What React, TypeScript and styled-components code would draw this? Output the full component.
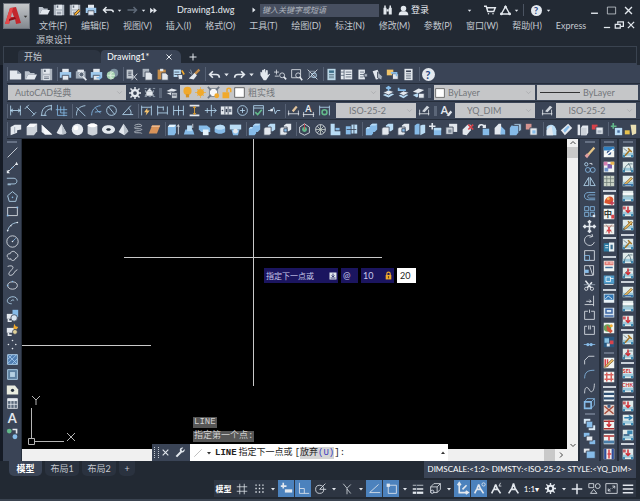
import React from "react";
import styled, { createGlobalStyle, css } from "styled-components";

const color = {
  frame: "#222933",
  bar: "#3a4456",
  edge: "#252d3a",
  line: "#3a4350",
  text: "#c3c8cf",
  bright: "#e9edf2",
  field: "#c5c6c8",
  accent: "#4c82bd",
};

const Global = createGlobalStyle`
  * { box-sizing: border-box; }
  html, body, #root { height: 100%; margin: 0; }
  body {
    background: ${color.frame};
    color: ${color.text};
    font: 9px/12px Lato, "Noto Sans CJK SC", sans-serif;
    overflow: hidden;
  }
  button, input, select { font: inherit; color: inherit; margin: 0; padding: 0; border: 0; background: none; border-radius: 0; outline: 0; }
`;

/* ---------- icons ---------- */

type Shape = [d: string, fill?: string, stroke?: string, width?: number];
type Letter = { t: string; x: number; y: number; s: number; f: string };
type Part = Shape | Letter;

const W = "#e3e8ee";
const G = "#9aa7b6";
const B = "#86bbe8";
const L = "#b9dcf5";
const O = "#f0a92c";
const R = "#d8434a";
const N = "none";
const K = "#3a4456";
const GR = "#62b98a";

const ring = (x: number, y: number, r: number) =>
  `M${x - r} ${y}a${r} ${r} 0 1 0 ${2 * r} 0a${r} ${r} 0 1 0 ${-2 * r} 0`;
const box = (x: number, y: number, w: number, h: number) => `M${x} ${y}h${w}v${h}h${-w}z`;

const printer: Part[] = [
  [box(4, 1, 8, 5), W],
  [box(1, 5, 14, 7), "#9fc9ec"],
  [box(4, 9, 8, 6), W, K, 1],
];
const floppy: Part[] = [
  ["M1 1h14v14h-14z", "#aeb6c0"],
  [box(4, 1, 8, 6), W],
  [box(4, 9, 8, 6), W],
  [box(5, 2, 2, 3), "#5d6877"],
  ["M5 11h6M5 13h6", N, "#5d6877", 1],
];
const cubes = (a: string, b: string): Part[] => [
  ["M6 3l3-2h6v7l-3 2h-6z", a],
  ["M1 7l2-2h7v8l-2 2h-7z", b, K, 1],
];
const sheet = (...extra: Part[]): Part[] => [[box(1, 1, 14, 14), "#f1f4f2"], ...extra];
const gateBase: Part[] = [
  [box(1, 1, 14, 14), "#dfeaea"],
  [box(1, 9, 14, 4), "#9cc8da"],
  [box(1, 12, 3, 3), "#3b86b0"],
  [box(12, 12, 3, 3), "#3b86b0"],
];
const gate = (...extra: Part[]): Part[] => [...gateBase, ...extra];
const downArrow: Part = ["M8 2v8M5 7l3 3 3-3", N, "#cf2f38", 2];
const pencil: Part = ["M3 12L12 3l2 2-9 8-3 1z", "#f0c468", "#7b5a2c", 1];
const arcMark: Part = ["M3 13C4 6 8 3 14 4", N, "#46606c", 1];
const hammer: Part = ["M4 13L11 5M8 3l5 5", N, "#a47526", 2];

const icons: Record<string, Part[]> = {
  new: [["M1 3h9l5 4v7h-14z", W], ["M10 3v4h5", "#8894a3"]],
  open: [["M1 4h5l2 2h5v2h-8l-3 6h-1z", "#b9c1cb"], ["M5 8h11l-3 6h-11z", W]],
  save: floppy,
  saveas: [...floppy, ["M7 13l6-6 2 2-6 6h-2z", O, "#4a3b2a", 1]],
  print: printer,
  preview: [[box(1, 4, 12, 9), "#9ca7b4"], [box(3, 2, 8, 3), W], [ring(8, 8, 3), "#5c6878", W, 1], ["M10 11l4 4", N, W, 2]],
  publish: [...printer, ["M8 11h3v-2l4 3-4 3v-2h-3z", B]],
  globe: [[ring(10, 6, 5), "#7d91a0"], [ring(6, 9, 5), "#a6d3b1"], ["M2 9h9M6 4v10M9 5c-6 3-5 7 0 8", N, "#e0efe3", 1]],
  cut: [[box(2, 2, 8, 11), "#c1c8d0"], ["M4 5h4M4 7h4M4 9h4", N, K, 1], ["M8 7l7 8M15 7l-7 8", N, W, 1]],
  copy: [[box(2, 1, 8, 10), "#aab3be"], ["M5 5h6l3 3v7h-9z", W, K, 1]],
  paste: [[box(2, 2, 10, 12), "#c58e4b"], [box(5, 1, 4, 3), W], ["M7 6h5l3 3v6h-8z", W, K, 1]],
  match: [[box(2, 2, 9, 9), L], ["M3 5h6M3 8h5", N, K, 1], ["M7 8h6v6h-5z", "#dfe6ee", K, 1], ["M12 3l3 5", N, O, 2]],
  brush: [["M14 2l-6 6", N, "#c58e4b", 3], ["M8 6l3 3-4 5-6-1z", W], ["M1 5l4 3M3 2l2 5", N, G, 1]],
  undo: [["M6 4L2 8l4 4M2 8h8c3 0 4 1 4 4", N, W, 2]],
  back: [["M6 4L2 8l4 4M2 8h10c2 0 3 1 3 3", N, W, 2]],
  backdim: [["M10 4l4 4-4 4M14 8h-12", N, "#5e6978", 2]],
  redo: [["M10 4l4 4-4 4M14 8h-8c-3 0-4 1-4 4", N, W, 2]],
  down: [["M4 6h8l-4 5z", W]],
  hand: [["M3 9V5c1-1 2 0 2 2V3c1-2 2 0 2 0v3V2c1-2 2 0 2 0v4l1-3c1-1 2 0 2 1v5l2-2c1 0 1 1 0 2l-4 6H7z", W]],
  zoomrt: [["M3 2v6M0 5h6M1 10h5", N, W, 1], [ring(10, 9, 3), N, W, 1], ["M12 11l3 3", N, W, 2]],
  zoomwin: [[box(2, 2, 11, 10), N, W, 1], [ring(10, 9, 3), K, W, 1], ["M12 11l3 4", N, W, 2]],
  zoomprev: [["M2 2l12 12M14 2l-12 12", N, W, 1], [box(4, 4, 7, 7), N, G, 1], [ring(10, 9, 3), N, L, 1]],
  props: [[box(3, 1, 10, 14), "#b9d6e6"], [box(5, 3, 6, 3), "#3c6e88"], ["M5 8h6M5 10h6M5 12h6", N, "#56707e", 1]],
  center: [[box(1, 2, 14, 12), W], ["M5 2v12M7 5h7M7 8h7M7 11h7M1 5h4M1 9h4", N, "#556274", 1]],
  palettes: [[box(3, 2, 8, 12), W], ["M5 5h5M5 8h5M5 11h4", N, "#556274", 1], [box(10, 7, 4, 4), "#aab3be", K, 1]],
  sheets: [["M2 4l6-2 5 11-7 1z", W], ["M8 5l6 5-1 5-5-3z", "#aab3be", K, 1]],
  markup: [[box(1, 2, 8, 7), "#f0c468"], [box(8, 7, 7, 7), W, K, 1], ["M6 6h7v4", N, B, 2]],
  calc: [[box(3, 1, 10, 14), W], [box(5, 3, 6, 2), K], ["M5 7h6M5 9h6M5 11h6M5 13h6", N, "#6b7787", 1]],
  gear: [[ring(8, 8, 4), N, W, 3], ["M8 0v4M8 12v4M0 8h4M12 8h4M2 2l3 3M11 11l3 3M14 2l-3 3M5 11l-3 3", N, W, 2]],
  ws: [["M2 3h3M7 3h3M12 3h3M2 13h3M7 13h3M12 13h3M3 5v3M3 10v3M13 5v3M13 10v3", N, G, 1], [box(4, 7, 8, 5), W], ["M8 3l4 4h-8z", W]],
  layers: [["M2 6l6-3 7 2-6 3z", W], ["M1 9l7-2 6 1-6 4z", W, K, 1], [box(8, 8, 7, 7), W, K, 1], ["M9 10h5M9 12h5", N, K, 1]],
  bulb: [[ring(8, 6, 5), O], [box(6, 10, 4, 4), "#d69324"]],
  sun: [[ring(8, 8, 5), O], ["M8 0v16M0 8h16M3 3l10 10M13 3l-10 10", N, O, 1]],
  freeze: [[box(3, 3, 10, 10), "#f7f7f7", "#6c7683", 1], ["M1 1l4 4M15 1l-4 4M1 15l4-4", N, "#6c7683", 2], [ring(12, 12, 3), O]],
  unlock: [[box(2, 7, 9, 8), O], ["M8 7V4c0-3 5-3 5 0v3", N, O, 2]],
  lock: [[box(3, 7, 10, 8), O], ["M5 7V5c0-4 6-4 6 0v2", N, O, 2], [box(7, 9, 2, 4), "#6a4a10"]],
  swatch: [[box(1, 1, 14, 14), "#fff", "#333", 1]],
  lay1: [["M1 11l7-3 7 2-7 4z", L], ["M1 8l7-3 7 2-7 4z", W, K, 1], ["M8 6V1M5 3l3-2 3 2", N, B, 2]],
  lay2: [["M2 12l6-3 6 2-6 4z", L], ["M2 9l6-3 7 2-7 4z", W, K, 1], ["M2 2v3h9", N, B, 2]],
  lay3: [["M1 7l7-4 7 2-7 4z", W], ["M1 11l6-2 4 1-5 4z", L], [box(8, 9, 7, 6), W, K, 1]],
  dlin: [["M2 2v12M14 2v12M2 8h12M5 6l-3 2 3 2M11 6l3 2-3 2", N, L, 1]],
  dali: [["M3 3l10 10M1 6l5-5M10 15l5-5", N, L, 1]],
  darc: [["M2 14C2 6 6 2 14 2M6 14c0-5 4-8 8-8M1 14h7M14 1v7", N, L, 1]],
  dord: [["M3 1v13h12M7 3v8h8M11 3v12M1 7h14", N, B, 1]],
  drad: [["M14 2C6 3 3 7 3 14M3 4l11 11", N, L, 1]],
  djog: [["M13 2C5 3 2 8 2 14M7 5l3 4 3 2M6 10l8-1", N, B, 1]],
  ddia: [[ring(8, 8, 6), N, L, 1], ["M4 3l8 10", N, L, 1]],
  dang: [["M2 13h13M2 13L12 2M9 5c3 2 4 5 3 8", N, L, 1]],
  dquick: [["M2 2v12M14 2v12M2 4h12", N, L, 1], ["M9 5l-4 5h3l-1 4 5-6h-3z", "#f7c56d"]],
  dbase: [["M2 2v12M14 3v10M9 3v5M2 4h7M2 11h12", N, L, 1]],
  dcont: [["M2 2v12M8 2v12M14 2v12M2 8h12", N, L, 1]],
  dspace: [["M2 2h12M2 14h12", N, W, 2], ["M8 3v10M6 5l2-2 2 2M6 11l2 2 2-2", N, O, 1]],
  dbreak: [["M1 8h14M9 1v14M4 5v6M12 5l3 3-3 3", N, L, 1]],
  tol: [[box(1, 3, 14, 10), W], ["M6 3v10M10 3v10", N, K, 1], [ring(3, 8, 1), K], [box(7, 6, 2, 4), K], [box(11, 6, 3, 4), "#6b7787"]],
  cmark: [[ring(8, 8, 6), N, L, 1], ["M8 5v6M5 8h6", N, L, 1]],
  insp: [["M2 14V2h12v12M2 5h12", N, L, 1], ["M4 10l3 3 5-6", N, GR, 2]],
  jogl: [["M0 8h5l2-4 2 8 2-4h4", N, L, 1], [box(3, 6, 3, 3), W]],
  dedit: [["M1 12h14M2 8v6M14 8v6", N, W, 1], ["M6 8l5-6 2 2-5 6z", "#e1c49c"]],
  dtedit: [["M1 13h14M2 10v6M14 10v6", N, W, 1], { t: "A", x: 4, y: 10, s: 11, f: W }],
  dupd: [["M2 2v12M14 2v12M2 4h12", N, L, 1], [ring(8, 10, 3), N, GR, 2]],
  dsty: [["M1 12h13M2 7v7M13 7v7", N, W, 1], ["M5 9l6-7 3 2-6 6z", "#cfd5dc"]],
  tsty: [{ t: "A", x: 1, y: 12, s: 13, f: W }, ["M8 14l5-6 2 2-4 5z", W]],
  polysolid: [["M2 5l5-3h8v6l-5 1v3l-8 3z", W], ["M7 5v7", N, "#95a1af", 1]],
  cube: [["M2 5l4-4h9v9l-4 5h-9z", "#cdd3da"], ["M2 5l4-4h9l-4 4z", "#f6f7f9"]],
  wedge: [["M2 2l13 12h-9l-4-3z", W], ["M2 2l4 12 9 0z", "#f6f7f9"]],
  cone: [["M8 1l6 11c-2 3-10 3-12 0z", W], ["M8 1l6 11c-1 2-4 2-5 2z", "#b8c0c9"]],
  sphere: [[ring(8, 8, 7), W], [ring(6, 6, 3), "#fff"]],
  cyl: [["M2 3c2-3 10-3 12 0v10c-2 3-10 3-12 0z", "#cdd3da"], ["M2 3c2-3 10-3 12 0-2 3-10 3-12 0z", "#fff"]],
  torus: [["M0 8c0-7 16-7 16 0s-16 7-16 0z", W], ["M5 8c1-2 5-2 6 0-1 2-5 2-6 0z", "#26303e"]],
  pyr: [["M8 1l6 9-5 5-7-4z", W], ["M8 1l6 9-5 5z", "#b8c0c9"]],
  helix: [["M3 3c3-2 8-2 9 0s-9 1-9 3 9 0 9 2-9 1-9 3 9 0 9 2", N, "#c3cad2", 1]],
  plane: [["M5 3h10l-4 10h-10z", "#d8935a"], ["M5 3h10l-1 2h-10z", "#ecb98d"]],
  extr: [["M1 5l2-3h8v10l-2 3h-8z", B], ["M1 5l2-3h8l-2 3z", "#e5f3fc"], ["M14 14V3M12 5l2-3 1 3", N, W, 1]],
  press: [["M3 8h9l2 6h-13z", B], ["M5 3h6v7h-6z", L], ["M12 1v5", N, W, 1]],
  sweep: [["M1 3h10l4 3v5h-11l-3-3z", B], [box(6, 8, 7, 7), "#e5f3fc"]],
  revolve: [["M2 6c2-5 12-5 13 0v5c-3 3-10 3-13 0z", B], ["M2 6c2-5 12-5 13 0-3 3-10 3-13 0z", L]],
  loft: [[box(1, 2, 14, 6), L], ["M3 8h10l-2 7h-6z", B], [ring(8, 10, 3), W]],
  union: [["M6 3l3-2h6v7l-3 3h-2v2l-2 2h-7v-8l2-2h3z", B], ["M6 3l3-2h6l-2 2zM1 7l2-2h3l-1 2z", L]],
  subtract: cubes(L, W),
  intersect: [...cubes(W, W), [box(6, 7, 4, 4), B, K, 1]],
  gizmo: [["M8 1l6 4v7l-6 3-6-3V5z", N, W, 1], [ring(8, 8, 3), GR], ["M8 8V1", N, R, 1]],
  orbit: [[ring(8, 8, 6), N, W, 1], ["M2 8h12M8 2v12M4 4l8 8M12 4l-8 8", N, "#c3cdc6", 1]],
  sect: [["M2 1h5v9h7v5h-12z", L], ["M8 6h5v3h-5z", B]],
  slice: [["M1 4h6v10h-6z", B], ["M8 2h7v11h-7z", L], ["M2 8h12M11 2v12", N, K, 1]],
  imprint: [["M2 3l3-2h3v13h-6z", B], ["M9 3l3-1h3v10l-6 3z", L]],
  move3: [["M4 0v8M0 4h8", N, W, 2], [box(6, 6, 9, 9), B], [box(6, 6, 9, 3), L]],
  offset3: [[box(5, 1, 10, 10), W], [box(1, 5, 9, 9), "#cdd3da", K, 1], [box(4, 8, 4, 4), "#808c9a"]],
  del3: [["M2 14V8l6-6h4v7l-5 6z", W], ["M9 2l6 6M15 2l-6 6", N, R, 2]],
  rot3: [["M2 6c0-5 6-5 7-1M7 5h3V2", N, W, 2], [box(7, 7, 8, 8), B]],
  taper: [["M2 14V6l5-5 3 0v13z", W], ["M10 4l5 5v5h-6z", B]],
  copyf: [["M1 6l2-3h9v8l-3 4h-8z", B], ["M5 3l2-2h8v8l-3 2V3z", L, K, 1]],
  colorf: [[box(1, 1, 7, 7), "#d4938f"], [box(6, 6, 9, 9), W, K, 1], [box(9, 9, 4, 4), B]],
  fillet: [["M2 15V5c4-5 11-3 12 4v6z", L], ["M2 15V9l6-6 2 12z", W]],
  chamf: [["M1 9l9-8 5 5-9 9z", W], ["M4 9l6-6 2 2-6 7z", B]],
  thick: [["M2 2h3v13h-3z", W], ["M6 6l2-3h7v9l-2 3h-7z", W], [box(6, 6, 7, 9), "#cdd3da"]],
  shell: [[box(1, 2, 7, 6), R], [box(6, 5, 9, 9), W, K, 1], [box(8, 9, 5, 3), "#aab3be"]],
  check: [["M4 0v7M1 4h7", N, GR, 2], [box(6, 6, 9, 9), L], [box(9, 9, 3, 3), "#4a6fa0"]],
  light: [["M8 2h7v11l-5 2z", "#e9dfb3"], [box(1, 9, 6, 5), "#e6c24d"]],
  line: [["M2 14L14 2", N, W, 1]],
  xline: [["M3 13L13 3", N, W, 1], [ring(3, 12, 1), W], ["M13 1l2 4h-4zM1 15v-4l4 4z", W], [ring(8, 8, 1), B]],
  pline: [["M1 4h9c5 1 4 7 0 7h-8M2 12h4", N, L, 1]],
  poly: [["M8 2l6 5-2 7h-8l-2-7z", N, L, 1], [ring(8, 9, 1), B]],
  rect: [[box(2, 3, 12, 10), N, W, 1], [box(1, 12, 2, 2), B], [box(13, 2, 2, 2), B]],
  arc: [["M2 14C3 8 7 4 14 3", N, L, 1], [ring(2, 13, 1), W], [ring(6, 7, 1), W], [ring(14, 3, 1), W]],
  circle: [[ring(8, 8, 7), N, W, 1], ["M8 8l4-4", N, B, 1], [ring(8, 8, 1), W]],
  cloud: [["M3 11c-3-2-1-6 2-5 1-4 6-4 7-1 4 1 3 6 0 6-1 4-6 4-6 1-2 1-4 0-3-1z", N, W, 1]],
  spline: [["M2 3c5-2 9 0 5 4s-5 7-1 7 4-6 8-7", N, W, 1]],
  ellipse: [["M2 8c0-6 12-6 12 0s-12 6-12 0z", N, W, 1], [ring(8, 3, 1), B], [ring(2, 8, 1), B]],
  earc: [["M7 12c-5 0-6-3-5-5 2-5 12-5 12 1M6 9c1-2 3-2 4-1", N, L, 1]],
  insert: [[box(1, 6, 9, 6), W], [box(8, 1, 7, 9), B], [ring(10, 11, 4), "#d7e4ef", K, 1], ["M3 12v3h4", N, W, 2]],
  block: [[box(1, 6, 9, 6), W], ["M10 1l2 3 3 1-2 3-4-1z", O], [ring(11, 11, 3), "#e1d29a", K, 1], ["M3 12v3h4", N, W, 2]],
  point: [[ring(8, 3, 1), W], [ring(3, 8, 1), W], [ring(12, 8, 1), W], [ring(8, 13, 1), W]],
  hatch: [[box(2, 2, 12, 12), "#4f7db0", L, 1], ["M2 8l6-6M2 13L13 2M7 14l7-7M3 3l11 11", N, "#a8cdf0", 1]],
  grad: [[box(2, 2, 12, 12), "#5c7f9f", L, 1], [box(5, 5, 6, 6), "#b5d0e2"]],
  region: [["M1 3h10l4 5v6h-14z", "#e9ecdf"], [ring(8, 9, 2), "#26303e"]],
  table: [[box(2, 2, 12, 12), "#59687b", W, 1], [box(2, 2, 12, 3), W], ["M6 4v10M10 4v10M2 9h12", N, W, 1]],
  text: [{ t: "A", x: 2, y: 14, s: 16, f: W }],
  addsel: [[ring(4, 5, 3), GR], ["M8 3h5v5", N, W, 2], [ring(11, 12, 3), B]],
  erase: [["M5 10l8-9 2 2-8 9z", "#e6c586"], ["M2 12l3-3 3 2-3 4z", "#de9fa0"]],
  copyo: [[ring(4, 4, 2), N, L, 1], ["M8 3h3v2", N, W, 1], [ring(6, 11, 3), N, B, 1], [ring(12, 11, 3), N, B, 1]],
  mirror: [["M7 3v10h-6zM9 3v10h6z", N, L, 1]],
  offset: [["M15 3H7c-7 0-7 9 0 9h8M15 6H8c-3 0-3 4 0 4h7", N, B, 1]],
  array: [[box(2, 2, 5, 5), N, B, 1], [box(9, 2, 5, 5), N, B, 1], [box(2, 9, 5, 5), N, B, 1], [box(9, 9, 5, 5), N, B, 1], [box(12, 12, 3, 3), W]],
  move: [["M8 1v14M1 8h14M6 3l2-2 2 2M6 13l2 2 2-2M3 6L1 8l2 2M13 6l2 2-2 2", N, W, 2]],
  rotate: [["M11 3c-5-3-10 1-9 6s9 8 12 1M8 4l4-1-1-3", N, W, 1]],
  scale: [[box(2, 2, 12, 12), N, W, 1], [box(2, 8, 6, 6), N, B, 1]],
  stretch: [["M2 2h6l4 12h-10zM8 2h5v12", N, W, 1], [box(2, 7, 5, 4), B]],
  trim: [["M3 2l7 9M11 4l-6 7", N, W, 2], [ring(4, 12, 2), N, W, 1], [ring(11, 12, 2), N, W, 1], ["M1 7h14", N, G, 1]],
  extend: [["M2 13h11M13 2v13M4 9h6M8 7l2 2-2 2", N, W, 1]],
  brk1: [["M6 4H2v10h12V4h-4M8 2v4", N, W, 1]],
  brk: [["M5 4H2v10h12V4h-3M7 3v5M9 3v5", N, W, 1]],
  join: [["M1 8h14", N, B, 1], [ring(6, 8, 2), B], [ring(10, 8, 2), B]],
  cham: [["M2 14V9l5-5h7", N, W, 1]],
  fil: [["M2 14c0-8 4-10 12-10", N, B, 1]],
  blend: [["M2 14c0-10 4-8 6-4s6 2 6-8", N, W, 1]],
  explode: [[box(2, 6, 8, 8), N, B, 2], ["M2 6l3-4h9v8l-4 4M10 6l4-4", N, B, 1]],
  ord1: [[box(1, 1, 8, 6), "#d7e8f5"], [box(7, 9, 8, 6), "#d7e8f5"], [box(4, 4, 8, 8), B, K, 1]],
  ord2: [[box(1, 1, 7, 5), B], [box(8, 10, 7, 5), B], [box(4, 5, 8, 6), W, K, 1]],
  ord3: [[box(1, 2, 7, 5), W], [box(4, 5, 11, 9), B, K, 1]],

  y1: sheet([box(1, 1, 14, 5), "#2e7fc0"], [ring(8, 9, 3), "#3d5b8c"], ["M2 14L14 4", N, "#fff", 2]),
  y2: sheet([box(1, 1, 5, 5), "#d67fb0"], [box(6, 4, 6, 6), "#7d5fae"], [box(10, 1, 5, 4), "#eab551"], [box(2, 9, 5, 5), "#6f93cb"]),
  y3: [[box(1, 1, 14, 14), "#c9d2c6"], ["M5 1v14M10 1v14M1 5h14M1 10h14", N, "#6e7b76", 1]],
  y4: sheet(["M2 12C2 3 13 0 14 8l-4 6z", "#d9542e"], [ring(7, 6, 2), "#f5b05a"], ["M9 12h6M12 9v6", N, "#c23a52", 2]),
  y5: sheet({ t: "中", x: 1, y: 12, s: 11, f: "#333b36" }, [box(11, 9, 4, 5), R]),
  y6: sheet(["M1 4h14M4 2l8 11M12 2l-8 11", N, "#a0766c", 1], ["M8 5v9M5 10h6", N, R, 2]),
  y7: [[box(1, 3, 9, 11), "#2f7ea5"], [box(8, 2, 7, 12), "#e9f1f3"], ["M3 6h4M3 9h4", N, "#fff", 1], [box(10, 5, 3, 6), "#3d6c8c"]],
  y8: sheet([box(2, 2, 12, 5), "#e07b74"], ["M3 10h10", N, "#41709c", 2], ["M4 4h3M9 4h4", N, "#fff", 1]),
  y9: [[box(1, 2, 14, 11), "#4f9ccb"], [box(4, 4, 6, 6), N, "#fff", 1], ["M10 6h4M2 14h12", N, "#fff", 1]],
  y10: [[box(1, 1, 14, 12), "#e7f1f6"], [box(2, 2, 12, 7), "#3176b4"], ["M3 8l4-4 5 4", N, "#fff", 1]],
  y11: [[box(1, 1, 14, 13), "#d6e4ef"], [box(4, 3, 8, 5), N, "#3d66a4", 2], ["M2 12h12", N, "#3d66a4", 2]],
  y12: sheet([ring(6, 8, 5), "#6ea259"], ["M5 4l8 8-3 3-5-4z", "#d4543d"], [ring(11, 5, 2), O]),
  y13: [[box(1, 1, 14, 14), "#28577f"], [box(2, 3, 6, 6), "#8ac2e2"], [box(9, 6, 5, 5), R], [box(5, 10, 4, 4), W]],
  y14: sheet(["M3 3v10M6 3v10", N, R, 2], pencil),
  y15: sheet(["M5 2v12M11 2v12M2 5h12M2 11h12", N, "#d7615d", 2]),
  y16: [[box(1, 1, 14, 14), "#e9f0f2"], ["M1 5h14M1 11h14", N, "#2e4f72", 3]],
  y17: [[box(1, 1, 14, 14), "#e2d5d0"], ["M2 3l12 10M14 3l-12 10", N, "#a94d3d", 2], [box(6, 1, 4, 4), "#3a5c83"]],
  y18: sheet(["M1 3h14M1 13h14", N, "#a83030", 2], downArrow),
  y19: sheet(["M1 4h14", N, "#a83030", 2], [box(1, 10, 14, 4), "#4a7da8"], ["M8 4v6", N, R, 2]),
  y20: [[box(1, 1, 14, 14), "#f3e9e5"], ["M3 1v14M13 1v14", N, "#2e4f9a", 3], ["M6 8h5M8 2v12", N, R, 2]],

  g1: gate(hammer, ["M2 3l5 4", N, "#5d6d74", 1]),
  g2: gate(arcMark, ["M8 3c3 2 4 6 4 10", N, "#46606c", 1]),
  g3: gate(pencil, [box(2, 12, 12, 2), "#3b6fa8"]),
  g4: gate([box(1, 4, 14, 3), "#f5f8f8"], ["M1 8h14", N, "#46808c", 1]),
  g5: gate(downArrow, [box(1, 2, 4, 4), "#c85a60"]),
  g6: gate(hammer, pencil),
  g7: gate(arcMark, downArrow),
  g8: gate(["M3 5h9M9 2l4 3-4 3", N, "#2e7fb0", 2]),
  g9: gate([box(7, 2, 7, 5), "#3b86b0"], ["M2 8h8", N, "#264f78", 2]),
  g10: gate({ t: "SEL", x: 1, y: 8, s: 7, f: "#d1322f" }),
  g11: gate({ t: "CHK", x: 0, y: 8, s: 7, f: "#d1322f" }),

  find: [[box(2, 5, 4, 9), W], [box(9, 5, 4, 9), W], [box(3, 2, 2, 4), W], [box(10, 2, 2, 4), W], [box(6, 7, 3, 3), W]],
  user: [[ring(8, 5, 4), W], ["M1 15c0-5 3-6 5-6h4c2 0 5 1 5 6z", W]],
  cart: [["M0 3h3l2 7h8l2-5H4", N, W, 2], [ring(6, 13, 1), W], [ring(12, 13, 1), W]],
  app: [["M8 2l6 11H2z", N, W, 2], [ring(8, 3, 2), W], [ring(2, 13, 2), W], [ring(14, 13, 2), W]],
  help: [[ring(8, 8, 8), W], { t: "?", x: 4, y: 13, s: 14, f: "#2a4a86" }],
  min: [["M3 12h10", N, W, 2]],
  max: [[box(2, 3, 12, 10), N, W, 1]],
  close: [["M3 3l10 10M13 3L3 13", N, W, 2]],
  restore: [[box(2, 7, 8, 6), N, W, 2], ["M6 6V3h9v7h-4", N, W, 2]],
  play: [["M5 3l6 5-6 5z", W]],
  more: [["M2 3l6 5-6 5zM8 3l6 5-6 5z", W]],
  up: [["M3 10l5-5 5 5", N, "#444", 2]],
  dn: [["M3 6l5 5 5-5", N, "#444", 2]],
  rt: [["M6 3l5 5-5 5", N, "#444", 2]],
  chev: [["M4 6l4 4 4-4", N, "#9b9da0", 1]],
  wrench: [["M2 14l7-7", N, W, 3], ["M14 3l-3 3-2-2 3-3c-5-1-6 4-4 6s7 1 6-4z", W]],
  diag: [["M2 14L14 2", N, "#9a9a9a", 1]],
  darrow: [["M4 6h8l-4 5z", "#333"]],
  uarrow: [["M4 10h8l-4-5z", "#333"]],
  key: [[box(1, 1, 14, 14), W], ["M8 3v6M5 7l3 3 3-3M3 12h10", N, "#3b3f77", 2]],

  sgrid: [["M5 1v14M11 1v14M1 5h14M1 11h14", N, W, 1]],
  sdots: [[[3, 8, 13].flatMap((x) => [3, 8, 13].map((y) => box(x - 1, y - 1, 2, 2))).join(""), W]],
  sdyn: [["M4 1v7M1 5h7", N, W, 2], [box(6, 9, 9, 4), W]],
  sortho: [["M3 1v13h12M3 8h6v6", N, W, 1]],
  spolar: [[ring(7, 9, 5), N, W, 1], ["M7 9l7-7M7 9h8", N, W, 1]],
  siso: [["M8 15V7L3 1M8 7l5-5M8 8l5 6", N, W, 1]],
  strack: [["M2 13L13 3M2 13h13", N, W, 1]],
  ssnap: [[box(4, 4, 10, 10), N, W, 1], [box(2, 2, 4, 4), W]],
  slw: [["M1 3h14", N, W, 1], ["M1 8h14", N, W, 2], ["M1 13h14", N, W, 3], ["M6 1v14", N, K, 1]],
  scube: [["M2 6l4-4h8v7l-4 4h-8zM2 6h8v7M10 6l4-4", N, W, 1], [ring(4, 12, 2), K, W, 1]],
  sucs: [["M4 2v11h11M2 4l2-3 2 3M12 11l3 2-3 2M8 9l5-5", N, W, 2]],
  sann1: [["M7 3l2 5 4 6M7 3L5 8l-3 6M5 9h5", N, W, 2], [ring(13, 3, 2), N, W, 1]],
  sann2: [["M7 3l2 5 4 6M7 3L5 8l-3 6M5 9h5", N, W, 2], ["M13 1l-2 4h3", N, W, 1]],
  sann3: [["M8 2l2 6 4 6M8 2L6 8l-4 6M6 9h5", N, W, 2]],
  splus: [["M8 1v14M1 8h14", N, W, 2]],
  siso2: [[box(1, 2, 6, 5), N, W, 1], [ring(12, 5, 3), N, W, 1], ["M7 9l4 5H3z", N, W, 1]],
  sfull: [[box(1, 2, 14, 12), N, W, 1], ["M9 5h3v3M12 5L9 8M7 11H4V8M4 11l3-3", N, W, 1]],
  smenu: [["M1 3h14M1 8h14M1 13h14", N, W, 2]],
};

const Svg = styled.svg<{ $s: number }>`
  display: block;
  flex: none;
  overflow: visible;
  width: ${(p) => p.$s}px;
  height: ${(p) => p.$s}px;
`;

const Icon = ({ n, s = 13 }: { n: string; s?: number }) => (
  <Svg viewBox="0 0 16 16" $s={s} aria-hidden="true">
    {(icons[n] || []).map((p, i) =>
      Array.isArray(p) ? (
        <path key={i} d={p[0]} fill={p[1]} stroke={p[2]} strokeWidth={p[3]} />
      ) : (
        <text key={i} x={p.x} y={p.y} fontSize={p.s} fontWeight="700" fill={p.f}>
          {p.t}
        </text>
      ),
    )}
  </Svg>
);

/* ---------- shared parts ---------- */

const center = css`
  display: flex;
  align-items: center;
  justify-content: center;
`;

const Tool = styled.button<{ $w?: number; $on?: boolean }>`
  ${center}
  flex: ${(p) => (p.$w ? "none" : "1 1 0")};
  width: ${(p) => (p.$w ? `${p.$w}px` : "auto")};
  min-width: 0;
  min-height: 0;
  background: ${(p) => (p.$on ? color.accent : "transparent")};
`;

const T = ({ n, w, s, on }: { n: string; w?: number; s?: number; on?: boolean }) => (
  <Tool type="button" aria-label={n} $w={w} $on={on}>
    <Icon n={n} s={s} />
  </Tool>
);

const Shell = styled.div`
  display: flex;
  flex-direction: column;
  height: 100vh;
`;

/* ---------- header ---------- */

const Header = styled.header`
  display: flex;
  gap: 6px;
  padding: 0 3px;
  height: 46px;
  flex: none;
`;

const Logo = styled.button`
  ${center}
  width: 27px;
  height: 26px;
  margin-top: 3px;
  flex: none;
  background: linear-gradient(#c4c7ca, #83888f);
  border: 1px solid #6c727b;
`;

const HeadBody = styled.div`
  flex: 1;
  min-width: 0;
`;

const TitleRow = styled.div`
  display: flex;
  align-items: center;
  height: 20px;
`;

const Title = styled.h1`
  margin: 0 0 0 17px;
  width: 72px;
  flex: none;
  font-size: 9px;
  font-weight: 400;
  color: ${color.bright};
`;

const Search = styled.input`
  flex: 0 1 119px;
  min-width: 0;
  height: 13px;
  margin: 0 1px 0 1px;
  padding: 0 2px;
  font-size: 8px;
  font-style: italic;
  background: #474f60;
  &::placeholder { color: #aeb4bd; opacity: 1; }
`;

const Login = styled.button`
  width: 21px;
  white-space: nowrap;
  text-align: left;
  color: ${color.bright};
`;

const Spring = styled.span<{ $g?: number }>`
  flex: ${(p) => p.$g || 1} 1 0;
`;

const Divider = styled.span`
  width: 1px;
  height: 12px;
  margin: 0 4px 0 3px;
  background: #4b5462;
`;

const MenuRow = styled.div`
  display: flex;
  align-items: flex-start;
`;

const Menu = styled.nav`
  display: flex;
  flex-wrap: wrap;
  column-gap: 14px;
  row-gap: 2px;
  flex: 1;
`;

const MenuItem = styled.button<{ $indent?: boolean }>`
  height: 12px;
  margin-left: ${(p) => (p.$indent ? "3px" : "0")};
  white-space: nowrap;
`;

/* ---------- document tabs ---------- */

const DocTabs = styled.div`
  display: flex;
  height: 19px;
  flex: none;
  margin: 0 3px;
  padding: 3px 0 0 14px;
  border: 1px solid ${color.line};
  border-bottom: 2px solid ${color.bar};
`;

const DocTab = styled.div<{ $on?: boolean }>`
  display: flex;
  align-items: center;
  justify-content: space-between;
  width: ${(p) => (p.$on ? "80px" : "83px")};
  padding: 0 8px 0 6px;
  background: ${(p) => (p.$on ? color.bar : "#2c3441")};
  border-radius: 4px 6px 0 0;
  color: ${(p) => (p.$on ? "#fff" : color.text)};
`;

/* ---------- toolbars ---------- */

const Bars = styled.div`
  flex: none;
  padding-left: 4px;
  border-left: 3px solid #151b25;
  background: ${color.bar};
`;

const Bar = styled.div<{ $h?: number }>`
  display: flex;
  align-items: center;
  height: ${(p) => p.$h || 18}px;
  border-bottom: 1px solid ${color.edge};
`;

const Group = styled.div<{ $w: number }>`
  display: flex;
  align-items: center;
  flex: none;
  width: ${(p) => p.$w}px;
  height: 14px;
  padding-right: 3px;
  border-left: 1px solid #566174;
`;

const Grip = styled.span`
  flex: none;
  width: 3px;
  height: 10px;
  margin: 0 2px;
  background: #5b6678;
`;

const Field = styled.label<{ $w?: number; $pad?: number }>`
  display: flex;
  align-items: center;
  gap: 1px;
  flex: ${(p) => (p.$w ? "none" : "0 1 101px")};
  width: ${(p) => (p.$w ? `${p.$w}px` : "auto")};
  height: 15px;
  margin: 0 1px;
  padding: 0 2px 0 ${(p) => p.$pad || 0}px;
  color: #73767b;
  background: ${color.field};
`;

const Pick = styled.select`
  appearance: none;
  flex: 1;
  min-width: 0;
  height: 13px;
  padding-left: 2px;
`;

const Dash = styled.span`
  flex: none;
  width: 40px;
  height: 1px;
  background: #333;
`;

type DropProps = { label: string; value: string; w?: number; pad?: number; arrow?: boolean; children?: React.ReactNode };
const Drop = ({ label, value, w, pad, arrow = true, children }: DropProps) => (
  <Field $w={w} $pad={pad}>
    {children}
    <Pick aria-label={label} defaultValue={value}>
      <option>{value}</option>
    </Pick>
    {arrow && <Icon n="chev" s={9} />}
  </Field>
);

const Tools = ({ w, list }: { w: number; list: string }) => (
  <Group $w={w}>
    {list.split(" ").map((n, i) => (
      <T key={i} n={n} w={n === "down" ? 9 : undefined} s={n === "down" ? 9 : 13} />
    ))}
  </Group>
);

/* ---------- work area ---------- */

const Work = styled.main`
  display: flex;
  flex: 1;
  min-height: 0;
  padding-right: 4px;
  border-left: 3px solid #151b25;
`;

const Column = styled.div<{ $w: number; $left?: boolean }>`
  display: flex;
  flex-direction: column;
  flex: none;
  width: ${(p) => p.$w}px;
  padding-bottom: ${(p) => (p.$left ? 20 : 0)}px;
  background: ${color.bar};
  border: 0 solid ${color.edge};
  border-width: ${(p) => (p.$left ? "0 1px 0 0" : "0 0 0 2px")};
`;

const ColGrip = styled.span`
  width: 10px;
  height: 2px;
  margin: 2px auto;
  background: #667184;
`;

const ColRule = styled.span`
  width: 13px;
  height: 2px;
  margin: 1px auto;
  background: #c9d0d8;
`;

const Strip = ({ w, list, left, s }: { w: number; list: string; left?: boolean; s?: number }) => (
  <Column $w={w} $left={left}>
    <ColGrip />
    {list.split(" ").map((n, i) =>
      n === "-" ? <ColRule key={i} /> : n === "=" ? <ColGrip key={i} /> : <T key={i} n={n} s={s} />,
    )}
  </Column>
);

const View = styled.section`
  position: relative;
  display: flex;
  flex-direction: column;
  flex: 1;
  min-width: 0;
`;

const ViewTop = styled.div`
  display: flex;
  flex: 1;
  min-height: 0;
`;

const Canvas = styled.div`
  position: relative;
  flex: 1;
  overflow: hidden;
  background: #000;
`;

const Drawing = styled.svg`
  position: absolute;
  inset: 0;
  width: 100%;
  height: 100%;
  fill: none;
  stroke: #c9c9c9;
  shape-rendering: crispEdges;
`;

const Ucs = styled.svg`
  position: absolute;
  left: 4px;
  bottom: 3px;
  width: 52px;
  height: 52px;
  fill: none;
  stroke: #b5b5b5;
`;

const Dynamic = styled.div`
  position: absolute;
  left: 242px;
  top: 129px;
  display: flex;
  gap: 3px;
  height: 15px;
  color: #c8c8ea;
`;

const DynBox = styled.span<{ $w: number; $small?: boolean }>`
  display: flex;
  align-items: center;
  justify-content: space-between;
  width: ${(p) => p.$w}px;
  padding: 0 1px 0 2px;
  font-size: ${(p) => (p.$small ? 8 : 9)}px;
  white-space: nowrap;
  background: #1b155f;
`;

const DynInput = styled.input`
  width: 19px;
  padding: 0 3px;
  color: #222;
  background: #fff;
`;

const VScroll = styled.div`
  display: flex;
  flex-direction: column;
  align-items: center;
  flex: none;
  width: 11px;
  background: #f0f0f0;
`;

const HScroll = styled.div`
  display: flex;
  align-items: center;
  justify-content: flex-end;
  flex: none;
  height: 12px;
  padding-right: 12px;
  background: #f0f0f0;
`;

const Thumb = styled.span<{ $h: number }>`
  width: 11px;
  height: ${(p) => p.$h}px;
  background: #c9c9c9;
`;

const Console = styled.div`
  position: absolute;
  left: 50%;
  bottom: 0;
  width: 296px;
  margin-left: -148px;
  font-family: "Liberation Mono", "Noto Sans CJK SC", monospace;
`;

const History = styled.div`
  display: flex;
  flex-direction: column;
  align-items: flex-start;
  gap: 3px;
  padding: 0 0 2px 41px;
`;

const Past = styled.span`
  height: 11px;
  padding: 0 1px;
  line-height: 11px;
  color: #d0d0d0;
  background: #565656;
`;

const Prompt = styled.div`
  display: flex;
  height: 17px;
  background: ${color.bar};
`;

const Dots = styled.span`
  width: 5px;
  margin: 3px 1px 3px 2px;
  border: 0 dotted #c3c9d1;
  border-width: 0 1px;
`;

const Command = styled.div`
  display: flex;
  align-items: center;
  flex: 1;
  gap: 2px;
  padding: 0 1px 0 3px;
  white-space: pre;
  color: #222;
  background: #fff;
`;

const Option = styled.button`
  height: 12px;
  color: #222;
  background: #d4d4d4;
  em { font-style: normal; color: #3c3cc0; }
`;

/* ---------- bottom ---------- */

const Bottom = styled.div`
  display: flex;
  align-items: stretch;
  justify-content: space-between;
  height: 17px;
  flex: none;
  padding: 0 4px 0 9px;
`;

const LayoutTabs = styled.nav`
  display: flex;
  gap: 3px;
`;

const LayoutTab = styled.button<{ $on?: boolean; $w: number }>`
  width: ${(p) => p.$w}px;
  height: 15px;
  border-radius: 0 0 5px 5px;
  white-space: nowrap;
  color: ${(p) => (p.$on ? "#fff" : color.text)};
  font-weight: ${(p) => (p.$on ? 700 : 400)};
  background: ${(p) => (p.$on ? color.bar : "#2a323f")};
`;

const Message = styled.output`
  padding: 1px 4px;
  font-size: 8px;
  line-height: 14px;
  white-space: nowrap;
  color: #fff;
  background: ${color.bar};
`;

const Status = styled.footer`
  display: flex;
  align-items: center;
  justify-content: flex-end;
  height: 23px;
  flex: none;
  padding-right: 4px;
  border-bottom: 2px solid #3a4350;
`;

const StatusCell = styled.div`
  display: flex;
  gap: 1px;
  height: 17px;
  background: #2d3542;
`;

const StatusText = styled.button<{ $bold?: boolean }>`
  width: 19px;
  font-size: 8px;
  font-weight: ${(p) => (p.$bold ? 700 : 400)};
  white-space: nowrap;
  color: #fff;
`;

const menus = [
  "文件(F)", "编辑(E)", "视图(V)", "插入(I)", "格式(O)", "工具(T)", "绘图(D)",
  "标注(N)", "修改(M)", "参数(P)", "窗口(W)", "帮助(H)", "Express",
];

export default function App() {
  return (
    <Shell>
      <Global />
      <Header>
        <Logo aria-label="应用程序菜单">
          <svg width="18" height="20" viewBox="0 0 18 20" aria-hidden="true">
            <path d="M1 18L6 2l6-1 5 16-5 1-1-5-5 1-1 4z" fill="#c3272d" />
            <path d="M1 18L6 2h3L5 18z" fill="#e5484a" />
            <path d="M8 6l2 5-3 0z" fill="#b1b4b8" />
            <path d="M5 13l6-2 1 2-7 2z" fill="#8d1118" />
          </svg>
          <Icon n="darrow" s={7} />
        </Logo>
        <HeadBody>
          <TitleRow>
            <T n="open" w={15} s={12} />
            <T n="save" w={16} s={12} />
            <T n="saveas" w={16} s={12} />
            <T n="print" w={16} s={12} />
            <T n="back" w={17} s={12} />
            <T n="down" w={7} s={7} />
            <T n="backdim" w={17} s={12} />
            <T n="down" w={7} s={7} />
            <T n="more" w={13} s={9} />
            <Title>Drawing1.dwg</Title>
            <T n="play" w={10} s={8} />
            <Search aria-label="搜索" placeholder="键入关键字或短语" />
            <T n="find" w={16} s={12} />
            <T n="user" w={15} s={11} />
            <Login type="button">登录</Login>
            <Spring $g={4} />
            <T n="down" w={8} s={7} />
            <Spring />
            <T n="cart" w={16} s={12} />
            <T n="app" w={14} s={11} />
            <T n="down" w={8} s={7} />
            <Divider />
            <T n="help" w={16} s={11} />
            <T n="down" w={8} s={7} />
            <Spring $g={4} />
            <T n="min" w={17} s={11} />
            <T n="max" w={17} s={11} />
            <T n="close" w={17} s={11} />
          </TitleRow>
          <MenuRow>
            <Menu>
              {menus.map((m, i) => (
                <MenuItem key={m} type="button" $indent={i === 0}>
                  {m}
                </MenuItem>
              ))}
              <MenuItem type="button">源泉设计</MenuItem>
            </Menu>
            <T n="min" w={12} s={10} />
            <T n="restore" w={12} s={10} />
            <T n="close" w={12} s={10} />
          </MenuRow>
        </HeadBody>
      </Header>

      <DocTabs>
        <DocTab>开始</DocTab>
        <DocTab $on>
          Drawing1*
          <Icon n="close" s={8} />
        </DocTab>
        <T n="splus" w={24} s={8} />
      </DocTabs>

      <Bars>
        <Bar $h={19}>
          <Tools w={50} list="new open save" />
          <Tools w={66} list="print preview publish globe" />
          <Tools w={82} list="cut copy paste match brush" />
          <Tools w={118} list="undo down redo down hand zoomrt zoomwin zoomprev" />
          <Tools w={96} list="props center palettes sheets markup calc" />
          <Tools w={20} list="help" />
        </Bar>
        <Bar>
          <Drop label="工作空间" value="AutoCAD经典" w={118} pad={5} />
          <T n="gear" w={15} s={12} />
          <T n="ws" w={15} />
          <Grip />
          <T n="layers" w={15} />
          <Drop label="图层" value="粗实线" w={200} pad={1}>
            <Icon n="bulb" s={13} />
            <Icon n="sun" s={11} />
            <Icon n="freeze" s={13} />
            <Icon n="unlock" s={12} />
            <Icon n="swatch" s={11} />
          </Drop>
          <T n="lay1" w={15} />
          <T n="lay2" w={15} />
          <T n="lay3" w={15} />
          <Grip />
          <Drop label="颜色" value="ByLayer" pad={1}>
            <Icon n="swatch" s={10} />
          </Drop>
          <Drop label="线型" value="ByLayer" pad={3} arrow={false}>
            <Dash />
          </Drop>
        </Bar>
        <Bar>
          <Tools w={65} list="dlin dali darc dord" />
          <Tools w={66} list="drad djog ddia dang" />
          <Tools w={147} list="dquick dbase dcont dspace dbreak tol cmark insp jogl" />
          <Tools w={50} list="dedit dtedit dupd" />
          <Drop label="标注样式" value="ISO-25-2" w={80} pad={11} />
          <T n="dsty" w={15} />
          <Grip />
          <T n="tsty" w={15} />
          <Drop label="文字样式" value="YQ_DIM" w={80} pad={10} />
          <Spring />
          <T n="dsty" w={15} />
          <Drop label="当前标注样式" value="ISO-25-2" w={80} pad={11} />
          <Spring />
        </Bar>
        <Bar $h={19}>
          <Tools w={158} list="polysolid cube wedge cone sphere cyl torus pyr helix plane" />
          <Tools w={81} list="extr press sweep revolve loft" />
          <Tools w={50} list="union subtract intersect" />
          <Tools w={66} list="gizmo orbit sect slice" />
          <Tools w={181} list="union subtract intersect imprint move3 offset3 del3 rot3 taper copyf colorf" />
          <Tools w={65} list="fillet chamf thick shell" />
          <Tools w={32} list="check light" />
        </Bar>
      </Bars>

      <Work>
        <Strip
          w={19}
          left
          list="line xline pline poly rect arc circle cloud spline ellipse earc insert block point hatch grad region table text addsel"
        />
        <View>
          <ViewTop>
            <Canvas>
              <Drawing aria-label="图形">
                <path d="M231.5 0V247M102 118.500H360M0 206.500H129" />
              </Drawing>
              <Ucs viewBox="0 0 52 52" aria-hidden="true">
                <path d="M5.500 45V14M8 47.500H38M2.500 44.500h6v6h-6z" />
                <path d="M6 2l4 4 4-4M10 6v5M41 39l8 8M49 39l-8 8" />
              </Ucs>
              <Dynamic>
                <DynBox $w={74} $small>
                  指定下一点或
                  <Icon n="key" s={8} />
                </DynBox>
                <DynBox $w={17}>@</DynBox>
                <DynBox $w={33}>
                  10
                  <Icon n="lock" s={9} />
                </DynBox>
                <DynInput aria-label="角度" defaultValue="20" />
              </Dynamic>
            </Canvas>
            <VScroll>
              <T n="up" w={11} s={8} />
              <Thumb $h={11} />
              <Spring />
              <T n="dn" w={11} s={8} />
            </VScroll>
          </ViewTop>
          <HScroll>
            <Thumb $h={12} />
            <T n="rt" w={11} s={8} />
          </HScroll>
          <Console>
            <History>
              <Past>LINE</Past>
              <Past>指定第一个点:</Past>
            </History>
            <Prompt>
              <Dots />
              <T n="close" w={11} s={9} />
              <T n="wrench" w={19} s={11} />
              <Command>
                <Icon n="diag" s={10} />
                <Icon n="darrow" s={8} />
                <b>LINE</b>
                <span>指定下一点或</span>
                <span>
                  [
                  <Option type="button">
                    放弃<em>(U)</em>
                  </Option>
                  ]:
                </span>
                <Spring />
                <Icon n="uarrow" s={8} />
              </Command>
            </Prompt>
          </Console>
        </View>
        <Strip
          w={21}
          list="erase copyo mirror offset array move rotate scale stretch trim extend brk1 brk join cham fil blend explode = ord1 ord2 ord3"
        />
        <Strip w={18} s={12} list="y1 y2 y3 - y4 y5 y6 - y7 - y8 y9 - y10 y11 y12 y13 = y14 y15 - y16 y17 y18 y19 y20" />
        <Strip w={19} s={12} list="g1 g2 g3 g4 g5 g6 - g1 g2 g7 - g3 g4 g5 - g1 g7 - g10 g11 - g5 g8 g9 - g5" />
      </Work>

      <Bottom>
        <LayoutTabs>
          <LayoutTab type="button" $w={33} $on>模型</LayoutTab>
          <LayoutTab type="button" $w={34}>布局1</LayoutTab>
          <LayoutTab type="button" $w={34}>布局2</LayoutTab>
          <LayoutTab type="button" $w={16}>+</LayoutTab>
        </LayoutTabs>
        <Message>{"DIMSCALE:<1:2> DIMSTY:<ISO-25-2> STYLE:<YQ_DIM>"}</Message>
      </Bottom>

      <Status>
        <StatusCell>
          <StatusText type="button" $bold>模型</StatusText>
          <T n="sgrid" w={16} s={12} />
          <T n="sdots" w={16} s={11} />
          <T n="down" w={9} s={8} />
          <T n="sdyn" w={16} on />
          <T n="sortho" w={16} on />
          <T n="spolar" w={16} />
          <T n="down" w={9} s={8} />
          <T n="siso" w={16} s={12} />
          <T n="down" w={9} s={8} />
          <T n="strack" w={16} on />
          <T n="ssnap" w={16} on />
          <T n="down" w={9} s={8} />
          <T n="slw" w={16} s={12} />
          <T n="scube" w={16} />
          <T n="down" w={9} s={8} />
          <T n="sucs" w={16} on />
          <T n="sann1" w={16} on />
          <T n="sann2" w={16} />
          <T n="sann3" w={16} />
          <StatusText type="button">1:1▾</StatusText>
          <T n="gear" w={16} s={11} />
          <T n="down" w={9} s={8} />
          <T n="splus" w={16} s={12} />
          <T n="siso2" w={16} />
          <T n="sfull" w={16} />
          <T n="smenu" w={16} s={12} />
        </StatusCell>
      </Status>
    </Shell>
  );
}
